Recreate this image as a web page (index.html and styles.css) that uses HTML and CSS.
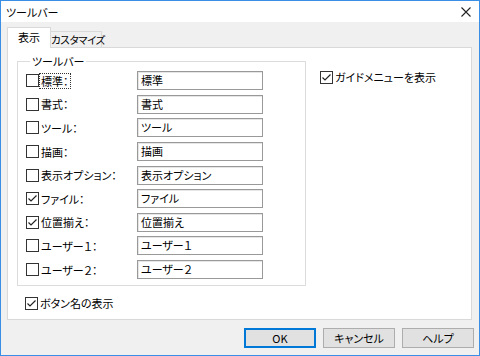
FILE: index.html
```html
<!DOCTYPE html>
<html lang="ja">
<head>
    <meta charset="UTF-8">
    <title>ツールバー</title>
    <link rel="stylesheet" href="styles.css">
</head>
<body>
    <div class="window">
        <div class="titlebar">
            <span class="title">ツールバー</span>
            <svg class="close" width="10" height="10" viewBox="0 0 10 10">
                <path d="M0.5 0.5 L9.5 9.5 M9.5 0.5 L0.5 9.5" stroke="#222" stroke-width="1.1" fill="none"/>
            </svg>
        </div>

        <div class="content">
            <div class="tabs">
                <div class="tab active">表示</div>
                <div class="tab">カスタマイズ</div>
            </div>

            <div class="panel">
                <div class="left">
                    <fieldset class="group">
                        <legend>ツールバー</legend>
                        <div class="row">
                            <div class="option">
                                <span class="check"></span>
                                <span class="label focus">標準：</span>
                            </div>
                            <div class="field">標準</div>
                        </div>
                        <div class="row">
                            <div class="option">
                                <span class="check"></span>
                                <span class="label">書式：</span>
                            </div>
                            <div class="field">書式</div>
                        </div>
                        <div class="row">
                            <div class="option">
                                <span class="check"></span>
                                <span class="label">ツール：</span>
                            </div>
                            <div class="field">ツール</div>
                        </div>
                        <div class="row">
                            <div class="option">
                                <span class="check"></span>
                                <span class="label">描画：</span>
                            </div>
                            <div class="field">描画</div>
                        </div>
                        <div class="row">
                            <div class="option">
                                <span class="check"></span>
                                <span class="label">表示オプション：</span>
                            </div>
                            <div class="field">表示オプション</div>
                        </div>
                        <div class="row">
                            <div class="option">
                                <span class="check"><svg width="11" height="11" viewBox="0 0 11 11"><path d="M1.5 5.5 L4 8 L9.5 2.5" stroke="#222" stroke-width="1.2" fill="none"/></svg></span>
                                <span class="label">ファイル：</span>
                            </div>
                            <div class="field">ファイル</div>
                        </div>
                        <div class="row">
                            <div class="option">
                                <span class="check"><svg width="11" height="11" viewBox="0 0 11 11"><path d="M1.5 5.5 L4 8 L9.5 2.5" stroke="#222" stroke-width="1.2" fill="none"/></svg></span>
                                <span class="label">位置揃え：</span>
                            </div>
                            <div class="field">位置揃え</div>
                        </div>
                        <div class="row">
                            <div class="option">
                                <span class="check"></span>
                                <span class="label">ユーザー１：</span>
                            </div>
                            <div class="field">ユーザー１</div>
                        </div>
                        <div class="row">
                            <div class="option">
                                <span class="check"></span>
                                <span class="label">ユーザー２：</span>
                            </div>
                            <div class="field">ユーザー２</div>
                        </div>
                    </fieldset>

                    <div class="option bottom-option">
                        <span class="check"><svg width="11" height="11" viewBox="0 0 11 11"><path d="M1.5 5.5 L4 8 L9.5 2.5" stroke="#222" stroke-width="1.2" fill="none"/></svg></span>
                        <span class="label">ボタン名の表示</span>
                    </div>
                </div>

                <div class="right">
                    <div class="option">
                        <span class="check"><svg width="11" height="11" viewBox="0 0 11 11"><path d="M1.5 5.5 L4 8 L9.5 2.5" stroke="#222" stroke-width="1.2" fill="none"/></svg></span>
                        <span class="label">ガイドメニューを表示</span>
                    </div>
                </div>
            </div>

            <div class="buttons">
                <button class="btn default">OK</button>
                <button class="btn">キャンセル</button>
                <button class="btn">ヘルプ</button>
            </div>
        </div>
    </div>
</body>
</html>
```

FILE: styles.css
```css
* {
    margin: 0;
    padding: 0;
    box-sizing: border-box;
}

body {
    font-family: "Noto Sans CJK JP", "Noto Sans", sans-serif;
    font-size: 11px;
    font-feature-settings: "palt";
    color: #000;
    background: #fff;
}

.window {
    width: 480px;
    height: 356px;
    border: 1px solid #3a8ee6;
    background: #f0f0f0;
    display: flex;
    flex-direction: column;
}

.titlebar {
    height: 21px;
    background: #fff;
    display: flex;
    align-items: center;
    justify-content: space-between;
    padding: 0 8px 0 5px;
}

.title {
    line-height: 14px;
}

.content {
    padding: 5px 0 0 6px;
}

.tabs {
    display: flex;
    align-items: flex-end;
    height: 21px;
    margin-bottom: -1px;
    position: relative;
    z-index: 1;
}

.tab {
    width: 51px;
    height: 17px;
    border: 1px solid #d9d9d9;
    border-left: none;
    background: #f0f0f0;
    font-size: 10.5px;
    letter-spacing: -0.4px;
    line-height: 15px;
    text-align: center;
    white-space: nowrap;
}

.tab.active {
    width: 44px;
    height: 21px;
    border-left: 1px solid #d9d9d9;
    border-bottom: none;
    background: #fff;
    font-size: 11px;
    letter-spacing: 0;
    line-height: 18px;
}

.panel {
    width: 465px;
    height: 273px;
    background: #fff;
    border: 1px solid #d9d9d9;
    padding: 6px 0 0 9px;
    display: flex;
    gap: 14px;
}

.group {
    width: 289px;
    border: 1px solid #dcdcdc;
    padding: 1px 0 4px 8px;
}

.group legend {
    margin-left: 4px;
    padding: 0 2px;
    line-height: 14px;
}

.row {
    height: 23.6px;
    display: grid;
    grid-template-columns: 111px 126px;
    align-items: center;
}

.option {
    display: flex;
    align-items: center;
}

.check {
    width: 13px;
    height: 13px;
    border: 1px solid #333;
    background: #fff;
    display: flex;
    align-items: center;
    justify-content: center;
    flex-shrink: 0;
}

.label {
    margin-left: 1px;
    line-height: 14px;
    padding: 0 1px;
    white-space: nowrap;
}

.label.focus {
    outline: 1px dotted #333;
}

.field {
    height: 19px;
    border: 1px solid #999;
    box-shadow: inset 1px 1px 0 #e6e6e6;
    padding-left: 3px;
    line-height: 17px;
}

.bottom-option {
    margin: 10px 0 0 8px;
}

.right {
    padding-top: 16px;
}

.buttons {
    display: flex;
    justify-content: flex-end;
    gap: 7px;
    margin-top: 8px;
    padding-right: 5px;
}

.btn {
    width: 72px;
    height: 20px;
    background: #e1e1e1;
    border: 1px solid #adadad;
    font-family: inherit;
    font-size: 11px;
    font-feature-settings: "palt";
    color: #000;
}

.btn.default {
    border: 2px solid #0078d7;
}
```
